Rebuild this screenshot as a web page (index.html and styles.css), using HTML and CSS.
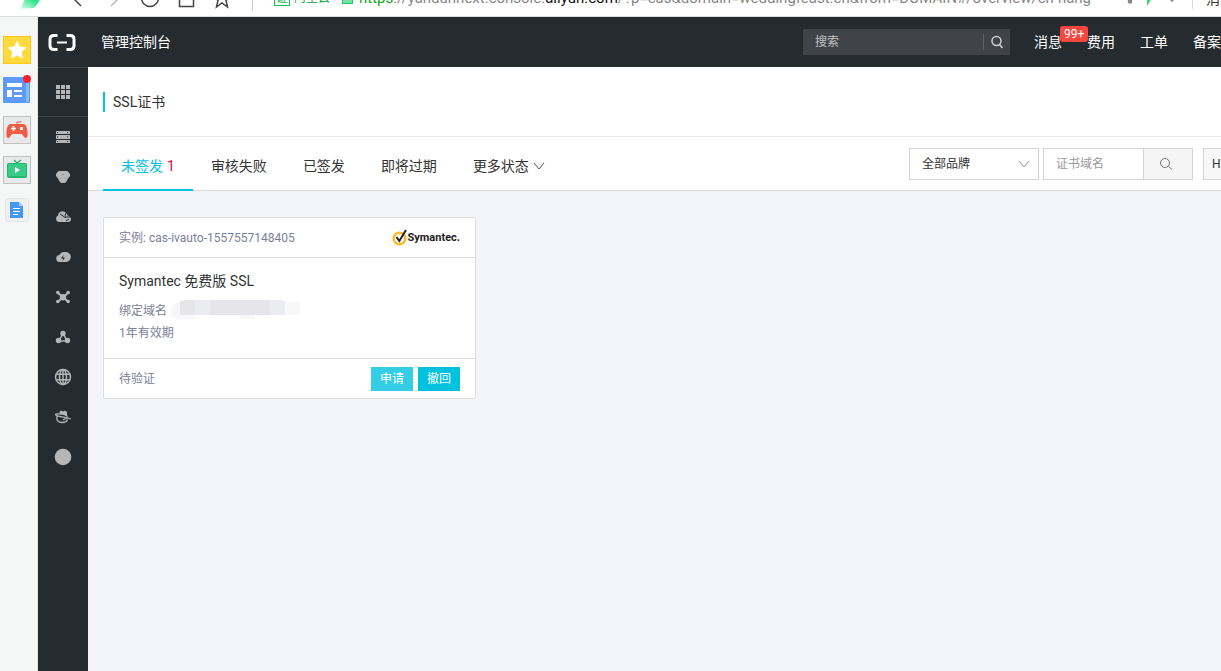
FILE: index.html
```html
<!DOCTYPE html>
<html lang="zh-CN">
<head>
<meta charset="utf-8">
<title>SSL证书 - 管理控制台</title>
<link rel="stylesheet" href="styles.css">
</head>
<body>
<div class="browser-bar">
  <div class="browser-row">
    <svg class="brand-mark" width="24" height="24" viewBox="0 0 24 24"><defs><linearGradient id="fade" x1="1" y1="0" x2="0" y2="1"><stop offset=".4" stop-color="#2fe48a"/><stop offset="1" stop-color="#2fe48a" stop-opacity=".1"/></linearGradient></defs><path d="M8 8h16L17 19l-2 2-14 1z" fill="url(#fade)"/></svg>
    <div class="browser-nav">
      <button class="bar-btn" aria-label="后退"><svg width="24" height="24" viewBox="0 0 24 24"><path d="M14 3L8 12l7 7"/></svg></button>
      <button class="bar-btn bar-btn-off" aria-label="前进"><svg width="24" height="24" viewBox="0 0 24 24"><path d="M10 3l6 9-7 7"/></svg></button>
      <button class="bar-btn" aria-label="刷新"><svg width="24" height="24" viewBox="0 0 24 24"><circle cx="12" cy="11" r="8.500"/></svg></button>
      <button class="bar-btn" aria-label="主页"><svg width="24" height="24" viewBox="0 0 24 24"><path d="M5.500 5v14.500h14V5"/></svg></button>
      <button class="bar-btn" aria-label="收藏"><svg width="24" height="24" viewBox="0 0 24 24"><path d="M12 3l2.500 6 6 .5-4.500 4 1.500 6.500-5.500-4-5.500 4 1.500-6.500-4.500-4 6-.5z"/></svg></button>
    </div>
    <div class="address">
      <span class="cert-box">证</span><span class="cert-name">阿里云</span>
      <span class="lock"></span>
      <span class="url"><span class="url-scheme">https</span>://yandunnext.console.<b>aliyun.com</b>/?p=cas&amp;domain=weddingfeast.cn&amp;from=DOMAIN#/overview/cn-hang</span>
    </div>
    <div class="bar-tools">
      <svg width="70" height="24" viewBox="0 0 70 24"><circle cx="8" cy="14.500" r="2.300" fill="#888"/><path d="M5 8h2l2 6H7z" fill="#888"/><path d="M25 8h7l-7 11z" fill="#3ccf75"/><path d="M47 11l3 3 3-3" fill="none" stroke="#888" stroke-width="1.500"/></svg>
      <span class="bar-menu">消息</span>
    </div>
  </div>
</div>
<div class="workspace">
  <aside class="fav-rail">
    <button class="fav" aria-label="收藏夹"><svg width="28" height="28" viewBox="0 0 28 28"><rect x=".5" y=".5" width="27" height="27" fill="#ffda3e" stroke="#fdc618"/><path d="M14 4.500l2.900 6 6.600.9-4.800 4.600 1.200 6.600-5.900-3.200-5.900 3.200 1.200-6.600-4.800-4.600 6.600-.9z" fill="#fff"/></svg></button>
    <button class="fav" aria-label="资讯"><svg width="28" height="30" viewBox="0 0 28 30"><rect y="2" width="27" height="26" rx="1" fill="#5c9bfa"/><path d="M23 5h3v22h-3z" fill="#8cbafd"/><path d="M4 8h15v4H4zM4 15h5v7H4zM11 15h8v2h-8zM11 20h8v2h-8z" fill="#fff"/><circle cx="24" cy="4" r="4" fill="#f8202c"/></svg></button>
    <button class="fav" aria-label="游戏"><svg width="28" height="28" viewBox="0 0 28 28"><rect x=".5" y=".5" width="27" height="27" fill="#e9e9e9" stroke="#c2c2c2"/><path d="M14 8V6h4V5" fill="none" stroke="#f05b44"/><path d="M8 8h12c3 0 4 3 4.500 8 .3 3 0 6-2 6-1.500 0-2-3-4-4h-9c-2 1-2.500 4-4 4-2 0-2.300-3-2-6C4 11 5 8 8 8z" fill="#f05b44"/><path d="M8 12.500h5M10.500 10v5" stroke="#fff" stroke-width="1.500"/><rect x="17" y="11" width="3" height="3" fill="#fff"/></svg></button>
    <button class="fav" aria-label="视频"><svg width="28" height="28" viewBox="0 0 28 28"><rect x=".5" y=".5" width="27" height="27" fill="#e9e9e9" stroke="#c2c2c2"/><path d="M11 4l3 3 4-3" fill="none" stroke="#1cab68" stroke-width="1.300"/><rect x="4" y="7" width="20" height="15" rx="2" fill="#22b573"/><rect x="5" y="8" width="18" height="12" rx="1" fill="#36cb86"/><path d="M12 11l5 3-5 3z" fill="#fff"/></svg></button>
    <button class="fav" aria-label="文档"><svg width="28" height="28" viewBox="0 0 28 28"><rect x="2.500" y="2.500" width="23" height="23" rx="3" fill="#f1f1f1" stroke="#e3e3e3"/><path d="M7 6h9l4 4v12H7z" fill="#4797f8"/><path d="M16 6v4h4z" fill="#a8d1ff"/><path d="M10 12.500h7M10 15.500h7M10 18.500h5" stroke="#fff"/></svg></button>
  </aside>
  <div class="console">
    <header class="top">
      <a class="logo" href="#" aria-label="首页"><svg width="28" height="17" viewBox="0 0 28 17"><g fill="none" stroke="#fff"><path d="M9.500 1.500H6Q2 1.500 2 5v7q0 3.500 4 3.500h3.500M18.500 1.500H22q4 0 4 3.500v7q0 3.500-4 3.500h-3.500" stroke-width="3"/><path d="M9 8.500h10" stroke-width="2"/></g></svg></a>
      <h1 class="top-title">管理控制台</h1>
      <form class="search">
        <input class="search-input" type="text" placeholder="搜索" aria-label="搜索">
        <button class="search-btn" type="button" aria-label="搜索"><svg width="14" height="14" viewBox="0 0 14 14"><circle cx="6.500" cy="6" r="4.500"/><path d="M9.500 9.500l3 3.500"/></svg></button>
      </form>
      <nav class="top-nav">
        <a href="#" class="has-badge">消息<span class="badge">99+</span></a><a href="#">费用</a><a href="#">工单</a><a href="#">备案</a>
      </nav>
    </header>
    <div class="console-body">
      <nav class="side">
        <a class="side-item side-grid" href="#" aria-label="产品"><svg width="16" height="16" viewBox="0 0 16 16"><path d="M1 1h4v4H1zM6 1h4v4H6zM11 1h4v4h-4zM1 6h4v4H1zM6 6h4v4H6zM11 6h4v4h-4zM1 11h4v4H1zM6 11h4v4H6zM11 11h4v4h-4z"/></svg></a>
        <a class="side-item" href="#" aria-label="云服务器"><svg width="16" height="16" viewBox="0 0 16 16"><rect x="1" y="2" width="14" height="3" rx=".5"/><rect x="1" y="6" width="14" height="4" rx=".5"/><rect x="1" y="11" width="14" height="3" rx=".5"/><path d="M2 3h1v1H2zM12 3h1v1h-1zM2 7.500h1v1H2zM12 7.500h1v1h-1zM2 12h1v1H2zM12 12h1v1h-1z" fill="#252b2f"/></svg></a>
        <a class="side-item" href="#" aria-label="数据库"><svg width="16" height="16" viewBox="0 0 16 16"><path d="M3.500 2h9L15 5v2l-2 2.500-1.500 3L10 14H6l-1.500-1.500-1.500-3L1 7V5z"/><path d="M7.500 5h1v1h-1zM5 9h1v.5H5zM10 9h1v.5h-1z" fill="#777"/></svg></a>
        <a class="side-item" href="#" aria-label="负载均衡"><svg width="16" height="16" viewBox="0 0 16 16"><path d="M3.500 13A3.500 3.500 0 0 1 3 6.500 4.500 4.500 0 0 1 11 4c1 1 1.500 1.500 1.500 2.500 2 .5 3.500 1.500 3.500 3.500s-1 3-3 3z"/><path d="M5 5l6 4M11 4l-1 3M10 8h6M11 12l3-2" stroke="#252b2f" fill="none"/></svg></a>
        <a class="side-item" href="#" aria-label="对象存储"><svg width="16" height="16" viewBox="0 0 16 16"><path d="M5 13a3.500 3.500 0 0 1-.5-7A5 5 0 0 1 10 3a5 5 0 0 1 1.500 10z"/><path d="M8.500 6L6 9.500h2L7.500 12 10 8.500H8z" fill="#252b2f"/></svg></a>
        <a class="side-item" href="#" aria-label="CDN"><svg width="16" height="16" viewBox="0 0 16 16"><path d="M3 4l10 8.500M13 4L3 12.500" stroke="#b4b6b8" stroke-width="2"/><circle cx="8" cy="8.200" r="3.200"/><circle cx="2.800" cy="3.500" r="1.800"/><circle cx="13.200" cy="3.500" r="1.800"/><circle cx="2.800" cy="12.500" r="1.800"/><circle cx="13.200" cy="12.500" r="1.800"/></svg></a>
        <a class="side-item" href="#" aria-label="专有网络"><svg width="16" height="16" viewBox="0 0 16 16"><path d="M8 4L4 12h8z" fill="none" stroke="#b4b6b8" stroke-width="1.500"/><circle cx="8" cy="4.500" r="2.700"/><circle cx="3.500" cy="11.500" r="2.700"/><circle cx="12.500" cy="11.500" r="2.700"/></svg></a>
        <a class="side-item" href="#" aria-label="域名"><svg width="18" height="18" viewBox="0 0 18 18"><g fill="none" stroke="#b4b6b8" stroke-width="1.500"><circle cx="9" cy="9" r="7.500"/><ellipse cx="9" cy="9" rx="3.500" ry="7.500"/><path d="M9 2v14M2.500 6.200h13M2.500 11.800h13"/></g></svg></a>
        <a class="side-item" href="#" aria-label="云盾"><svg width="18" height="16" viewBox="0 0 18 16"><path d="M5.500 5.500V3L7 1.500 9 2.500l2-1L13 3v2.500l1 3L10 6z"/><path d="M5.500 5C2 4.500.5 5.500 2.500 6.500S10 8 17 10M3 7c-1 4 1 6.500 5 6.500 3 0 5-1 5.500-3M13 9L9 11" fill="none" stroke="#b4b6b8" stroke-width="1.300"/></svg></a>
        <a class="side-item" href="#" aria-label="更多"><svg width="18" height="18" viewBox="0 0 18 18"><circle cx="9" cy="9" r="8.300"/></svg></a>
      </nav>
      <main class="main">
        <div class="page-head"><h2 class="page-title">SSL证书</h2></div>
        <div class="toolbar">
          <div class="tabs">
            <button class="tab tab-active">未签发 <span class="count">1</span></button>
            <button class="tab">审核失败</button>
            <button class="tab">已签发</button>
            <button class="tab">即将过期</button>
            <button class="tab">更多状态<svg class="chevron" width="12" height="8" viewBox="0 0 12 8"><path d="M1 1l5 6 5-6"/></svg></button>
          </div>
          <div class="filters">
            <div class="select-wrap">
              <select class="select" aria-label="品牌"><option>全部品牌</option></select>
              <svg class="chevron select-arrow" width="12" height="8" viewBox="0 0 12 8"><path d="M1 1l5 6 5-6"/></svg>
            </div>
            <div class="domain">
              <input class="domain-input" type="text" placeholder="证书域名" aria-label="证书域名">
              <button class="domain-btn" aria-label="查询"><svg width="14" height="14" viewBox="0 0 14 14"><circle cx="6" cy="6" r="4.500"/><path d="M9.500 9.500l3.500 3"/></svg></button>
            </div>
            <button class="buy">HB</button>
          </div>
        </div>
        <section class="cards">
          <article class="card">
            <div class="card-head">
              <span>实例: cas-ivauto-1557557148405</span>
              <span class="vendor"><svg width="16" height="18" viewBox="0 0 16 18"><circle cx="7.500" cy="9.500" r="5.800" fill="#fff" stroke="#fdbb30" stroke-width="2.600"/><path d="M4.500 8l2.800 4L14 1" fill="none" stroke="#222" stroke-width="2"/></svg><span class="vendor-name">Symantec.</span></span>
            </div>
            <div class="card-body">
              <h3 class="card-title">Symantec 免费版 SSL</h3>
              <p class="card-line">绑定域名 <svg class="redacted" width="130" height="22" viewBox="0 0 130 22"><path d="M0 8l5-5h5v15l-4 2-6-5z" fill="#f7f7f9"/><path d="M9 1l5-1h95l6 2v13H9z" fill="#e6e6ea"/><path d="M24 0h15v15H24zM99 0h10l6 2v13H99z" fill="#ebecef"/><path d="M114 2h15v13h-15zM9 15h15v4l-15 1zM69 15h15v4H69z" fill="#f8f8fa"/></svg></p>
              <p class="card-line">1年有效期</p>
            </div>
            <div class="card-foot">
              <span>待验证</span>
              <div class="actions"><button class="btn btn-light">申请</button><button class="btn">撤回</button></div>
            </div>
          </article>
        </section>
      </main>
    </div>
  </div>
</div>
</body>
</html>
```
FILE: styles.css
```css
* { box-sizing: border-box; }
body {
  margin: 0;
  min-height: 100vh;
  display: flex;
  flex-direction: column;
  overflow-x: hidden;
  font: 14px/20px Roboto, "Noto Sans CJK SC", sans-serif;
  color: #333;
  background: #f4f5fa;
}
h1, h2, h3, p { margin: 0; font-weight: 400; }
a { color: inherit; text-decoration: none; }
button, input, select { font: inherit; color: inherit; margin: 0; }
button { padding: 0; border: 0; background: none; cursor: pointer; }
svg { display: block; flex: none; }

/* Browser toolbar: only its lower edge is in view */
.browser-bar {
  height: 17px;
  display: flex;
  flex-direction: column;
  justify-content: flex-end;
  overflow: hidden;
  background: #fff;
  border-bottom: 1px solid #dcdfe0;
}
.browser-row {
  height: 34px;
  flex: none;
  display: flex;
  align-items: center;
  padding-left: 19px;
}
.browser-nav {
  display: flex;
  margin-left: 17px;
  padding-right: 12px;
  border-right: 1px solid #ccc;
}
.bar-btn { width: 36px; display: flex; justify-content: center; }
.bar-btn svg { fill: none; stroke: #444; stroke-width: 1.5; }
.bar-btn-off svg { stroke: #bbb; }
.address {
  flex: 1;
  min-width: 0;
  display: flex;
  align-items: center;
  padding: 0 0 3px 21px;
  white-space: nowrap;
}
.cert-box {
  border: 1px solid #0fbf54;
  color: #0fbf54;
  font-size: 12px;
  line-height: 14px;
  padding: 0 1px;
}
.cert-name { color: #12a54b; font-size: 12px; margin: 0 12px 0 4px; }
.lock { width: 11px; height: 12px; background: #74e6a5; border: 1px solid #22c867; margin-right: 6px; }
.url { color: #888; font-size: 15px; }
.url b { color: #111; font-weight: 400; }
.url-scheme { color: #10a51c; }
.bar-tools { display: flex; align-items: center; }
.bar-menu {
  width: 29px;
  padding-left: 13px;
  border-left: 1px solid #ddd;
  overflow: hidden;
  white-space: nowrap;
}

.workspace { flex: 1; display: flex; }
.fav-rail {
  width: 38px;
  flex: none;
  padding: 13px 4px 0 3px;
  background: #f5f7f6;
  border-right: 1px solid #e4e6e6;
}
.fav { display: flex; align-items: center; height: 40px; width: 28px; }

.console { flex: 1; min-width: 0; display: flex; flex-direction: column; }
.top {
  height: 50px;
  display: flex;
  align-items: center;
  padding-left: 10px;
  color: #fff;
  background: #252b2f;
}
.top-title { font-size: 14px; margin-left: 25px; }
.search {
  display: flex;
  align-items: center;
  width: 207px;
  height: 26px;
  margin: 0 24px 0 auto;
  background: #404347;
}
.search-input {
  flex: 1;
  min-width: 0;
  padding: 0 12px;
  border: 0;
  outline: 0;
  background: none;
  font-size: 12px;
}
.search-input::placeholder { color: #c2c4c6; opacity: 1; }
.search-btn {
  width: 27px;
  height: 16px;
  display: flex;
  align-items: center;
  justify-content: center;
  border-left: 1px solid #5d6165;
}
.search-btn svg { fill: none; stroke: #d0d2d3; stroke-width: 1.5; }
.top-nav { display: flex; gap: 25px; white-space: nowrap; }
.has-badge { position: relative; }
.badge {
  position: absolute;
  left: 26px;
  top: -6px;
  padding: 0 4px;
  border-radius: 3px;
  background: #f7453f;
  font-size: 12px;
  line-height: 16px;
}

.console-body { flex: 1; display: flex; }
.side { width: 50px; flex: none; background: #252b2f; }
.side-item { height: 40px; display: flex; align-items: center; justify-content: center; }
.side-item svg { fill: #b4b6b8; }
.side-grid { height: 50px; border: solid #3b4145; border-width: 1px 0; }

.main { flex: 1; min-width: 0; }
.page-head {
  height: 70px;
  display: flex;
  align-items: center;
  padding-left: 15px;
  background: #fff;
  border-bottom: 1px solid #ebebeb;
}
.page-title { font-size: 14px; padding-left: 8px; border-left: 2px solid #00c1de; }
.toolbar {
  height: 54px;
  display: flex;
  padding-left: 15px;
  background: #fff;
  border-bottom: 1px solid #d9d9d9;
}
.tabs { display: flex; margin-bottom: -1px; }
.tab {
  display: flex;
  align-items: center;
  gap: 4px;
  padding: 6px 18px 0;
  white-space: nowrap;
  border-bottom: 2px solid transparent;
}
.tab-active { color: #00c1de; border-color: #00c1de; }
.count { color: #f00036; }
.chevron { fill: none; stroke: #555; }
.filters { display: flex; align-items: center; margin-left: auto; font-size: 12px; }
.select-wrap { position: relative; width: 130px; margin-right: 4px; }
.select {
  display: block;
  width: 100%;
  height: 32px;
  padding: 0 12px;
  appearance: none;
  border: 1px solid #d5d5d5;
  border-radius: 0;
  background: #fff;
}
.select-arrow { position: absolute; right: 9px; top: 12px; stroke: #999; }
.domain { display: flex; width: 150px; height: 32px; margin-right: 10px; border: 1px solid #d5d5d5; }
.domain-input { flex: 1; min-width: 0; padding: 0 12px; border: 0; outline: 0; }
.domain-input::placeholder { color: #999; opacity: 1; }
.domain-btn {
  width: 49px;
  display: flex;
  align-items: center;
  justify-content: center;
  padding-right: 4px;
  background: #f5f5f5;
  border-left: 1px solid #d5d5d5;
}
.domain-btn svg { fill: none; stroke: #777; }
.buy {
  width: 18px;
  height: 32px;
  padding-left: 8px;
  overflow: hidden;
  white-space: nowrap;
  text-align: left;
  background: #f7f7f7;
  border: solid #d5d5d5;
  border-width: 1px 0 1px 1px;
}

.cards { padding: 26px 15px; }
.card {
  max-width: 373px;
  background: #fff;
  border: 1px solid #dcdcdc;
  border-radius: 2px;
  font-size: 12px;
  color: #7b809a;
}
.card-head, .card-foot { height: 40px; display: flex; align-items: center; justify-content: space-between; padding: 0 15px; }
.card-head { border-bottom: 1px solid #dcdcdc; }
.card-foot { border-top: 1px solid #dcdcdc; }
.vendor { display: flex; align-items: center; color: #222; }
.vendor-name { font-weight: 700; font-size: 11px; }
.card-body { padding: 13px 15px 14px; }
.card-title { font-size: 14px; color: #333; margin-bottom: 9px; }
.card-line { display: flex; align-items: center; gap: 4px; line-height: 22px; }
.actions { display: flex; gap: 5px; }
.btn { width: 42px; height: 24px; color: #fff; background: #00c1de; }
.btn-light { background: #33cde5; }
```
